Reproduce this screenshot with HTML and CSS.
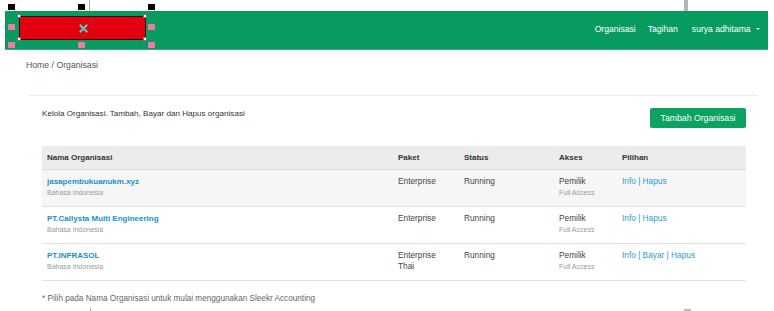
FILE: index.html
```html
<!DOCTYPE html>
<html>
<head>
<meta charset="utf-8">
<link rel="stylesheet" href="styles.css">
</head>
<body>
<div class="stage">
  <div class="guide guide-a-top"></div>
  <div class="guide guide-b-top"></div>
  <div class="guide guide-a-bot"></div>
  <div class="guide guide-b-bot"></div>

  <nav class="navbar">
    <div class="brand-box">
      <svg class="brand-x" width="9" height="9" viewBox="0 0 9 9"><path d="M1.5 1.5 L7.5 7.5 M7.5 1.5 L1.5 7.5" stroke="#4fd0c6" stroke-width="2" stroke-linecap="square"/></svg>
    </div>
    <ul class="nav-links">
      <li>Organisasi</li>
      <li>Tagihan</li>
      <li>surya adhitama <span class="caret"></span></li>
    </ul>
  </nav>

  <span class="h h-black h1"></span>
  <span class="h h-black h2"></span>
  <span class="h h-black h3"></span>
  <span class="h h-pink p1"></span>
  <span class="h h-pink p2"></span>
  <span class="h h-pink p3"></span>
  <span class="h h-pink p4"></span>
  <span class="h h-pink p5"></span>
  <span class="c c1"></span>
  <span class="c c2"></span>
  <span class="c c3"></span>
  <span class="c c4"></span>

  <div class="breadcrumb">Home / Organisasi</div>

  <section class="panel">
    <div class="panel-head">
      <p class="intro">Kelola Organisasi. Tambah, Bayar dan Hapus organisasi</p>
      <button class="btn-add">Tambah Organisasi</button>
    </div>
    <table class="orgs">
      <colgroup>
        <col class="c-nama"><col class="c-paket"><col class="c-status"><col class="c-akses"><col class="c-pilihan">
      </colgroup>
      <thead>
        <tr><th>Nama Organisasi</th><th>Paket</th><th>Status</th><th>Akses</th><th>Pilihan</th></tr>
      </thead>
      <tbody>
        <tr class="striped">
          <td><a class="org">jasapembukuanukm.xyz</a><div class="sub">Bahasa Indonesia</div></td>
          <td>Enterprise</td>
          <td>Running</td>
          <td>Pemilik<div class="sub">Full Access</div></td>
          <td><a class="act">Info | Hapus</a></td>
        </tr>
        <tr>
          <td><a class="org">PT.Callysta Multi Engineering</a><div class="sub">Bahasa Indonesia</div></td>
          <td>Enterprise</td>
          <td>Running</td>
          <td>Pemilik<div class="sub">Full Access</div></td>
          <td><a class="act">Info | Hapus</a></td>
        </tr>
        <tr>
          <td><a class="org">PT.INFRASOL</a><div class="sub">Bahasa Indonesia</div></td>
          <td>Enterprise Thai</td>
          <td>Running</td>
          <td>Pemilik<div class="sub">Full Access</div></td>
          <td><a class="act">Info | Bayar | Hapus</a></td>
        </tr>
      </tbody>
    </table>
    <p class="note">* Pilih pada Nama Organisasi untuk mulai menggunakan Sleekr Accounting</p>
  </section>
</div>
</body>
</html>
```

FILE: styles.css
```css
* { box-sizing: border-box; }
html, body { margin: 0; padding: 0; background: #fff; }
body { font-family: "Liberation Sans", Arial, sans-serif; color: #444; font-size: 8.7px; }

.stage { position: relative; width: 774px; height: 311px; overflow: hidden; }

.guide { position: absolute; background: #a8a8a8; }
.guide-a-top { left: 89px; top: 0; width: 1px; height: 11px; }
.guide-b-top { left: 684px; top: 0; width: 4px; height: 11px; background: #b4b4b4; }
.guide-a-bot { left: 90px; top: 308px; width: 1px; height: 3px; }
.guide-b-bot { left: 684px; top: 309px; width: 7px; height: 2px; background: #b8b8b8; }

.navbar {
  margin: 11px 6px 0 5px;
  height: 39px;
  background: #089b5f;
  border-bottom: 1px solid #35ae80;
  display: flex;
  align-items: flex-start;
  justify-content: space-between;
}
.brand-box {
  margin: 5px 0 0 14px;
  width: 127px; height: 24px;
  background: #e3000f;
  border: 1px solid #3a0a0a;
  display: flex; align-items: center; justify-content: center;
}
.brand-x { display: block; margin-left: 1px; }
.nav-links {
  list-style: none; margin: 13px 8px 0 0; padding: 0;
  display: flex; gap: 12px; color: #fff; font-size: 8.6px; line-height: 10px;
}
.nav-links li:last-child { margin-left: 2px; }
.caret {
  display: inline-block; width: 0; height: 0; margin-left: 3px; vertical-align: 2px;
  border-left: 2px solid transparent; border-right: 2px solid transparent; border-top: 2px solid #fff;
}

.h { position: absolute; width: 7px; height: 6px; }
.h-black { background: #000; top: 4px; height: 6px; }
.h-pink { background: #ef7ba2; }
.h1 { left: 8px; } .h2 { left: 78px; } .h3 { left: 148px; }
.p1 { left: 8px; top: 24px; } .p2 { left: 8px; top: 42px; }
.p3 { left: 78px; top: 42px; }
.p4 { left: 148px; top: 24px; } .p5 { left: 148px; top: 42px; }
.c { position: absolute; width: 4px; height: 4px; background: #fff; border: 1px solid #777; }
.c1 { left: 17px; top: 14px; } .c2 { left: 143px; top: 14px; }
.c3 { left: 17px; top: 37px; } .c4 { left: 143px; top: 37px; }

.breadcrumb { margin: 10px 0 0 26px; line-height: 10px; color: #555; }

.panel {
  margin: 25px 16px 0 29px;
  border-top: 1px solid #ebebeb;
  padding: 0 12px 0 13px;
}
.panel-head { display: flex; justify-content: space-between; align-items: flex-start; padding-top: 12px; }
.intro { margin: 1px 0 0; line-height: 10px; color: #333; font-size: 8.1px; }
.btn-add {
  width: 96px; height: 20px; border: 0; border-radius: 2px;
  background: #0ca262; color: #fff;
  font-family: "Liberation Sans", Arial, sans-serif; font-size: 8.7px; padding: 0;
}

.orgs { width: 100%; border-collapse: collapse; margin-top: 18px; table-layout: fixed; }
.c-nama { width: 351px; } .c-paket { width: 64px; } .c-status { width: 97px; }
.c-akses { width: 63px; } .c-pilihan { width: 129px; }
.orgs th {
  background: #ececec; text-align: left; font-weight: bold; color: #333;
  height: 23px; padding: 0 5px; font-size: 8px; border-bottom: 1px solid #dcdcdc;
}
.orgs th:nth-child(3), .orgs td:nth-child(3) { padding-left: 7px; }
.orgs td {
  vertical-align: top; padding: 6px 5px 0; height: 37px; line-height: 11px;
  border-bottom: 1px solid #e2e2e2; color: #444; font-size: 8.3px;
}
.orgs tr.striped td { background: #f6f6f6; }
.org { color: #1c8ec8; font-weight: bold; font-size: 8px; }
.act { color: #2a9bd4; }
.sub { color: #999; font-size: 7px; line-height: 12px; }

.note { margin: 13px 0 0; color: #666; line-height: 10px; font-size: 8.2px; }
```
